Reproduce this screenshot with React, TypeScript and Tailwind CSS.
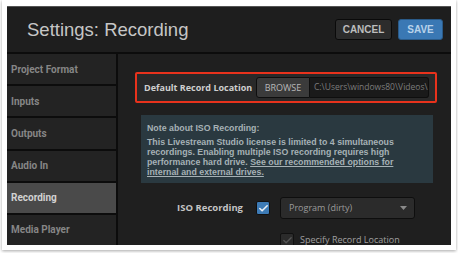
import { Check } from "lucide-react";

const navItems = ["Project Format", "Inputs", "Outputs", "Audio In", "Recording", "Media Player"];

function SideNav() {
  return (
    <div className="flex w-[111px] flex-col border-r-2 border-[#0c0c0c] bg-[#232323]">
      {navItems.map((item, i) => (
        <div
          key={item}
          className={
            "flex flex-1 items-center pl-[4px] text-[10px] font-bold " +
            (i > 0 ? "border-t-2 border-[#0c0c0c] " : "") +
            (item === "Recording" ? "bg-[#4a4a4a] text-[#d2d2d2]" : "text-[#868686]")
          }
          style={{ fontFamily: "Roboto, sans-serif" }}
        >
          {item}
        </div>
      ))}
    </div>
  );
}

function RecordingPanel() {
  return (
    <div className="flex-1 overflow-hidden bg-[#1f1f1f] pl-[17px] pt-[18px]" style={{ fontFamily: "'Open Sans', sans-serif" }}>
      <div className="flex h-[31px] w-[302px] items-center rounded-[2px] border-2 border-[#e8321c] bg-[#292929] pl-[7px] pr-[6px]">
        <span className="text-[9px] font-bold text-[#cfcfcf]">Default Record Location</span>
        <div className="ml-auto flex h-[21px]">
          <button className="w-[54px] rounded-l-[3px] border border-[#0e0e0e] bg-[#3b3b3b] text-[9px] text-[#b8b8b8]">
            BROWSE
          </button>
          <div className="flex w-[119px] items-center rounded-r-[3px] border border-l-0 border-[#0e0e0e] bg-[#1a1a1a] pl-[4px] text-[8.5px] text-[#7c7c7c]">
            C:\Users\windows80\Videos\
          </div>
        </div>
      </div>

      <div
        className="ml-[6px] mt-[12px] h-[68px] w-[292px] bg-[#2a3940] px-[6px] pt-[8px] text-[8.8px] font-bold leading-[10px] text-[#a6b1b5]"
        style={{ fontFamily: "'Liberation Sans', Arial, sans-serif" }}
      >
        <p className="mb-[4px]">Note about ISO Recording:</p>
        <p className="whitespace-nowrap">
          This Livestream Studio license is limited to 4 simultaneous
          <br />
          recordings. Enabling multiple ISO recording requires high
          <br />
          performance hard drive. <span className="underline">See our recommended options for</span>
          <br />
          <span className="underline">internal and external drives.</span>
        </p>
      </div>

      <div className="mt-[14px] flex items-center">
        <span className="w-[108px] text-right text-[9.5px] font-bold text-[#c4c4c4]">ISO Recording</span>
        <div className="ml-[13px] flex h-[14px] w-[14px] items-center justify-center rounded-[2px] border border-[#111] bg-[#3d7bb6]">
          <Check size={11} strokeWidth={3.5} color="#e8eef4" />
        </div>
        <div className="ml-[10px] flex h-[22px] w-[135px] items-center justify-between rounded-[3px] border border-[#0e0e0e] bg-[#2b2b2b] pl-[8px] pr-[7px] text-[9px] text-[#9a9a9a]">
          <span>Program (dirty)</span>
          <svg width="7" height="4" viewBox="0 0 7 4"><path d="M0 0h7L3.5 4z" fill="#8a8a8a" /></svg>
        </div>
      </div>

      <div className="ml-[145px] mt-[14px] flex items-center">
        <div className="flex h-[14px] w-[14px] items-center justify-center rounded-[2px] border border-[#111] bg-[#2b2b2b]">
          <Check size={11} strokeWidth={3} color="#555" />
        </div>
        <span className="ml-[6px] text-[9px] text-[#a0a0a0]">Specify Record Location</span>
      </div>
    </div>
  );
}

export default function App() {
  return (
    <div className="h-[253px] w-[458px] overflow-hidden bg-white pl-[2px]">
      <div className="h-[250px] w-[454px] bg-white px-[5px] pt-[6px] shadow-[0_1px_3px_rgba(0,0,0,0.35)]">
        <div className="flex h-[239px] w-[444px] flex-col overflow-hidden border-t border-[#555] bg-[#1e1e1e]">
          <div className="flex h-[47px] items-center border-b-2 border-[#0c0c0c] pl-[20px] pr-[8px]">
            <h1 className="text-[18.5px] text-[#c6c6c6]" style={{ fontFamily: "'Liberation Sans', Arial, sans-serif" }}>
              Settings: Recording
            </h1>
            <div className="ml-auto flex gap-[6px] text-[10px] font-bold" style={{ fontFamily: "'Liberation Sans', Arial, sans-serif" }}>
              <button className="h-[21px] w-[57px] rounded-[3px] border border-[#0a0a0a] bg-[#2c2c2c] text-[#bdbdbd]">CANCEL</button>
              <button className="h-[21px] w-[45px] rounded-[3px] border border-[#2a5a88] bg-[#3a78b4] text-[#b8d2ea]">SAVE</button>
            </div>
          </div>
          <div className="flex flex-1 overflow-hidden">
            <SideNav />
            <RecordingPanel />
          </div>
        </div>
      </div>
    </div>
  );
}
